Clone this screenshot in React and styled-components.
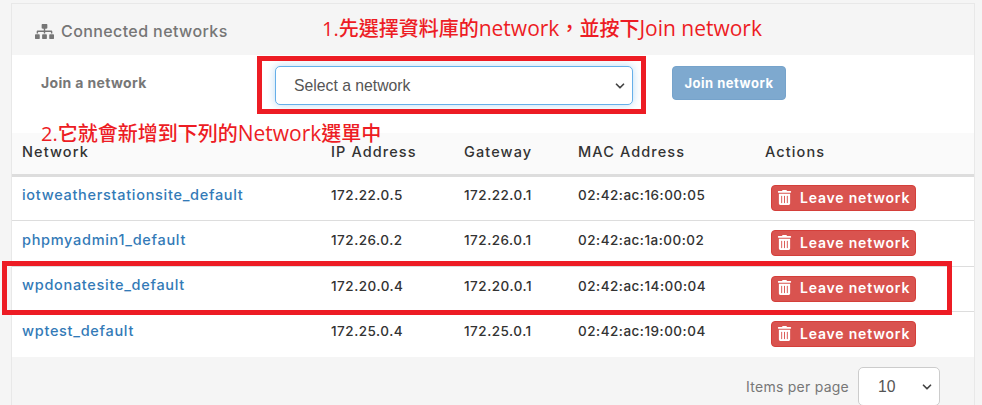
import React from 'react';
import styled, {createGlobalStyle} from 'styled-components';
import {FaSitemap, FaTrashAlt} from 'react-icons/fa';
import {ChevronDown} from 'lucide-react';

const Global = createGlobalStyle`
    html, body {
        margin: 0;
        height: 405px;
        overflow: hidden;
        background: #f5f5f5;
        font-family: Inter, "Noto Sans", sans-serif;
    }
`;
const Card = styled.div`
    position: relative;
    margin: 4px 8px 0 12px;
    height: 401px;
    box-sizing: border-box;
    box-shadow: 0 0 0 1px #e8e8e8;
    background: #f5f5f5;
`;
const Header = styled.div`
    height: 51px;
    display: flex;
    align-items: center;
    gap: 7px;
    padding-left: 23px;
    box-sizing: border-box;
    padding-top: 3px;
    color: #767676;
    font-size: 16px;
    font-weight: 500;
    letter-spacing: 0.4px;
`;
const JoinForm = styled.div`
    height: 78px;
    background: #fff;
    display: flex;
    align-items: flex-start;
    padding: 11px 0 0 29px;
    box-sizing: border-box;
`;
const JoinLabel = styled.div`
    width: 234px;
    padding-top: 8px;
    font-size: 14px;
    font-weight: 700;
    letter-spacing: 0.35px;
    color: #777;
`;
const SelectWrap = styled.div`
    position: relative;
    width: ${p => p.$width}px;
    height: ${p => p.$height}px;
    flex: none;
`;
const NetworkSelect = styled.select`
    appearance: none;
    width: 100%;
    height: 100%;
    padding: 0 0 0 18px;
    box-sizing: border-box;
    background: #fff;
    border: 1px solid #66afe9;
    border-radius: 5px;
    box-shadow: 0 0 8px rgba(102, 175, 233, .45);
    font-family: "Liberation Sans", Arial, sans-serif;
    font-size: 15.75px;
    color: #555;
    outline: none;
`;
const SizeSelect = styled(NetworkSelect)`
    padding-left: 19px;
    border-color: #ccc;
    box-shadow: none;
`;
const Chevron = styled(ChevronDown)`
    position: absolute;
    right: 6px;
    top: 50%;
    margin-top: -7px;
    width: 14px;
    height: 14px;
    color: #444;
    pointer-events: none;
`;
const JoinButton = styled.button`
    margin-left: 39px;
    width: 114px;
    height: 34px;
    border: 1px solid #76a3cb;
    border-radius: 4px;
    background: #7ea9cf;
    color: #fff;
    font-family: inherit;
    font-size: 13px;
    font-weight: 700;
    letter-spacing: 0.5px;
    padding: 0;
`;
const Table = styled.table`
    width: 100%;
    border-collapse: collapse;
    table-layout: fixed;
    background: #fff;
`;
const HeadRow = styled.tr`
    height: 42px;
    background: #fafafa;
    border-bottom: 3px solid #ddd;
`;
const Th = styled.th`
    box-sizing: border-box;
    width: ${p => p.$width}px;
    padding: 0 0 3px 10px;
    text-align: left;
    font-size: 14.5px;
    font-weight: 500;
    letter-spacing: 1.1px;
    color: #333;
`;
const Row = styled.tr`
    height: ${p => p.$height}px;
    border-bottom: 1px solid #ddd;
    &:last-child {
        border-bottom: 0;
    }
`;
const Td = styled.td`
    padding: 0 0 6px 10px;
    font-size: 13.5px;
    font-weight: 500;
    letter-spacing: 0.5px;
    color: #333;
`;
const LinkCell = styled(Td)`
    padding-bottom: 8px;
`;
const NetworkLink = styled.a`
    color: #337ab7;
    font-size: 14.5px;
    letter-spacing: 0.7px;
    text-decoration: none;
`;
const ActionCell = styled.td`
    padding: 0 0 0 16px;
`;
const LeaveButton = styled.button`
    display: flex;
    align-items: center;
    gap: 8px;
    width: 145px;
    height: 26px;
    padding: 0 0 2px 5px;
    box-sizing: border-box;
    border: 1px solid #d43f3a;
    border-radius: 4px;
    background: #d9534f;
    color: #fff;
    font-family: inherit;
    font-size: 14px;
    font-weight: 600;
    letter-spacing: 0.8px;
`;
const Footer = styled.div`
    display: flex;
    justify-content: flex-end;
    align-items: center;
    gap: 9px;
    padding: 10px 34px 0 0;
`;
const FooterLabel = styled.span`
    font-size: 14px;
    letter-spacing: 0.25px;
    color: #777;
`;
const Note = styled.div`
    position: absolute;
    left: ${p => p.$left}px;
    top: ${p => p.$top}px;
    color: #ed1c24;
    font-family: "Open Sans", "Noto Sans CJK TC", sans-serif;
    font-size: 20px;
    font-weight: 500;
    line-height: 24px;
    white-space: nowrap;
`;
const NoteLatin = styled.span`
    font-size: 21px;
    line-height: 20px;
`;
const Mark = styled.div`
    position: absolute;
    left: ${p => p.$left}px;
    top: ${p => p.$top}px;
    width: ${p => p.$width}px;
    height: ${p => p.$height}px;
    border: 5px solid #ed1c24;
    box-sizing: border-box;
`;

const networks = [
    {name: 'iotweatherstationsite_default', ip: '172.22.0.5', gateway: '172.22.0.1', mac: '02:42:ac:16:00:05', height: 45},
    {name: 'phpmyadmin1_default', ip: '172.26.0.2', gateway: '172.26.0.1', mac: '02:42:ac:1a:00:02', height: 46},
    {name: 'wpdonatesite_default', ip: '172.20.0.4', gateway: '172.20.0.1', mac: '02:42:ac:14:00:04', height: 45},
    {name: 'wptest_default', ip: '172.25.0.4', gateway: '172.25.0.1', mac: '02:42:ac:19:00:04', height: 46},
];

export default function App() {
    return (
        <Card lang="zh-Hant">
            <Global/>
            <Header><FaSitemap size={19}/>Connected networks</Header>
            <JoinForm>
                <JoinLabel>Join a network</JoinLabel>
                <SelectWrap $width={358} $height={39}>
                    <NetworkSelect defaultValue="">
                        <option value="">Select a network</option>
                    </NetworkSelect>
                    <Chevron strokeWidth={3}/>
                </SelectWrap>
                <JoinButton>Join network</JoinButton>
            </JoinForm>
            <Table>
                <thead>
                    <HeadRow>
                        <Th $width={309}>Network</Th>
                        <Th $width={133}>IP Address</Th>
                        <Th $width={114}>Gateway</Th>
                        <Th $width={187}>MAC Address</Th>
                        <Th>Actions</Th>
                    </HeadRow>
                </thead>
                <tbody>
                    {networks.map(net => <Row key={net.name} $height={net.height}>
                        <LinkCell><NetworkLink href="#">{net.name}</NetworkLink></LinkCell>
                        <Td>{net.ip}</Td>
                        <Td>{net.gateway}</Td>
                        <Td>{net.mac}</Td>
                        <ActionCell>
                            <LeaveButton><FaTrashAlt size={15}/>Leave network</LeaveButton>
                        </ActionCell>
                    </Row>)}
                </tbody>
            </Table>
            <Footer>
                <FooterLabel>Items per page</FooterLabel>
                <SelectWrap $width={82} $height={39}>
                    <SizeSelect defaultValue="10">
                        <option value="10">10</option>
                    </SizeSelect>
                    <Chevron strokeWidth={3}/>
                </SelectWrap>
            </Footer>
            <Note $left={310} $top={13}>1.先選擇資料庫的<NoteLatin>network</NoteLatin>，並按下<NoteLatin>Join network</NoteLatin></Note>
            <Note $left={29} $top={118}>2.它就會新增到下列的<NoteLatin>Network</NoteLatin>選單中</Note>
            <Mark $left={245} $top={52} $width={389} $height={58}/>
            <Mark $left={-10} $top={257} $width={950} $height={54}/>
        </Card>
    );
}
